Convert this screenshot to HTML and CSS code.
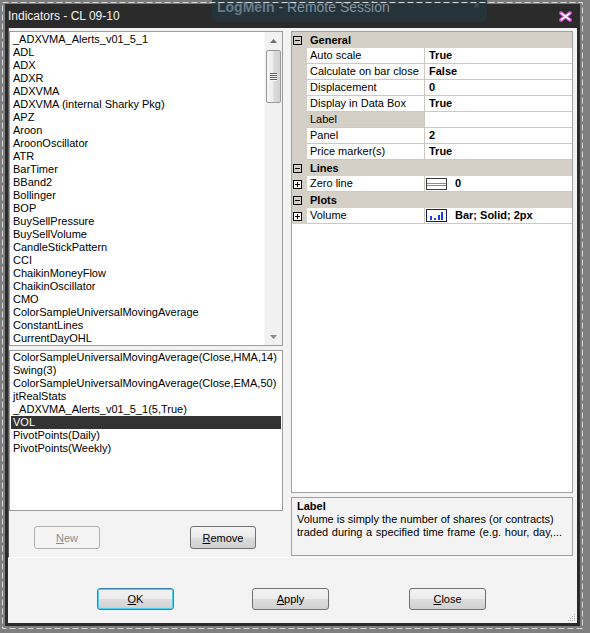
FILE: index.html
```html
<!DOCTYPE html>
<html>
<head>
<meta charset="utf-8">
<link rel="stylesheet" href="styles.css">
</head>
<body>
<div class="screen">
  <div class="window">
    <div class="titlebar">
      <span class="title">Indicators - CL 09-10</span>
      <svg class="close-x" width="13" height="11" viewBox="0 0 13 11">
        <path d="M2 2 L11 9 M11 2 L2 9" stroke="#c43fc4" stroke-width="4" stroke-linecap="square"/>
        <path d="M2.5 2.5 L10.5 8.5 M10.5 2.5 L2.5 8.5" stroke="#ffffff" stroke-width="1.8" stroke-linecap="square"/>
      </svg>
    </div>
    <div class="content">
      <div class="upper">
        <div class="leftcol">
          <div class="list list-all">
            <div class="items">
              <div class="item">_ADXVMA_Alerts_v01_5_1</div>
              <div class="item">ADL</div>
              <div class="item">ADX</div>
              <div class="item">ADXR</div>
              <div class="item">ADXVMA</div>
              <div class="item">ADXVMA (internal Sharky Pkg)</div>
              <div class="item">APZ</div>
              <div class="item">Aroon</div>
              <div class="item">AroonOscillator</div>
              <div class="item">ATR</div>
              <div class="item">BarTimer</div>
              <div class="item">BBand2</div>
              <div class="item">Bollinger</div>
              <div class="item">BOP</div>
              <div class="item">BuySellPressure</div>
              <div class="item">BuySellVolume</div>
              <div class="item">CandleStickPattern</div>
              <div class="item">CCI</div>
              <div class="item">ChaikinMoneyFlow</div>
              <div class="item">ChaikinOscillator</div>
              <div class="item">CMO</div>
              <div class="item">ColorSampleUniversalMovingAverage</div>
              <div class="item">ConstantLines</div>
              <div class="item">CurrentDayOHL</div>
            </div>
            <div class="vscroll">
              <div class="arrow up"><svg width="7" height="4" viewBox="0 0 7 4"><path d="M0 4 L3.5 0 L7 4 Z" fill="#6d6d6d"/></svg></div>
              <div class="thumb"><span></span><span></span><span></span><span></span></div>
              <div class="track"></div>
              <div class="arrow down"><svg width="7" height="4" viewBox="0 0 7 4"><path d="M0 0 L3.5 4 L7 0 Z" fill="#8a8a8a"/></svg></div>
            </div>
          </div>
          <div class="list list-applied">
            <div class="item">ColorSampleUniversalMovingAverage(Close,HMA,14)</div>
            <div class="item">Swing(3)</div>
            <div class="item">ColorSampleUniversalMovingAverage(Close,EMA,50)</div>
            <div class="item">jtRealStats</div>
            <div class="item">_ADXVMA_Alerts_v01_5_1(5,True)</div>
            <div class="item sel">VOL</div>
            <div class="item">PivotPoints(Daily)</div>
            <div class="item">PivotPoints(Weekly)</div>
          </div>
          <div class="btnrow">
            <div class="btn disabled btn-new"><u>N</u>ew</div>
            <div class="btn btn-remove"><u>R</u>emove</div>
          </div>
        </div>
        <div class="rightcol">
          <div class="grid">
            <div class="cat"><div class="margin"><span class="pm minus"></span></div><div class="catname">General</div></div>
            <div class="row"><div class="margin"></div><div class="name">Auto scale</div><div class="value">True</div></div>
            <div class="row"><div class="margin"></div><div class="name">Calculate on bar close</div><div class="value">False</div></div>
            <div class="row"><div class="margin"></div><div class="name">Displacement</div><div class="value">0</div></div>
            <div class="row"><div class="margin"></div><div class="name">Display in Data Box</div><div class="value">True</div></div>
            <div class="row"><div class="margin"></div><div class="name selected">Label</div><div class="value"></div></div>
            <div class="row"><div class="margin"></div><div class="name">Panel</div><div class="value">2</div></div>
            <div class="row"><div class="margin"></div><div class="name">Price marker(s)</div><div class="value">True</div></div>
            <div class="cat"><div class="margin"><span class="pm minus"></span></div><div class="catname">Lines</div></div>
            <div class="row"><div class="margin"><span class="pm plus"></span></div><div class="name">Zero line</div><div class="value withicon">
              <svg class="vicon" width="21" height="12" viewBox="0 0 21 12"><rect x="0.5" y="0.5" width="20" height="11" fill="#fff" stroke="#3c3c3c"/><path d="M1 5.5 H20 M1 7.5 H20" stroke="#8c8c8c"/></svg>0</div></div>
            <div class="cat"><div class="margin"><span class="pm minus"></span></div><div class="catname">Plots</div></div>
            <div class="row"><div class="margin"><span class="pm plus"></span></div><div class="name">Volume</div><div class="value withicon">
              <svg class="vicon" width="21" height="13" viewBox="0 0 21 13"><rect x="0.5" y="0.5" width="20" height="12" fill="#fff" stroke="#1c1c5c"/><rect x="4" y="7" width="2" height="4" fill="#1a3cf0"/><rect x="8" y="9" width="2" height="2" fill="#1a3cf0"/><rect x="12" y="6" width="2" height="5" fill="#1a3cf0"/><rect x="15" y="3" width="2" height="8" fill="#1a3cf0"/></svg>Bar; Solid; 2px</div></div>
          </div>
          <div class="desc">
            <div class="desc-title">Label</div>
            <div class="desc-line l1">Volume is simply the number of shares (or contracts)</div>
            <div class="desc-line l2">traded during a specified time frame (e.g. hour, day,...</div>
          </div>
        </div>
      </div>
      <div class="footer">
        <div class="btn btn-ok"><u>O</u>K</div>
        <div class="btn btn-apply"><u>A</u>pply</div>
        <div class="btn btn-close"><u>C</u>lose</div>
      </div>
      <svg class="grip" width="10" height="10" viewBox="0 0 10 10">
        <g fill="#b4b4b4">
          <rect x="8" y="2" width="1" height="1"/>
          <rect x="6" y="4" width="1" height="1"/><rect x="8" y="4" width="1" height="1"/>
          <rect x="4" y="6" width="1" height="1"/><rect x="6" y="6" width="1" height="1"/><rect x="8" y="6" width="1" height="1"/>
          <rect x="2" y="8" width="1" height="1"/><rect x="4" y="8" width="1" height="1"/><rect x="6" y="8" width="1" height="1"/><rect x="8" y="8" width="1" height="1"/>
        </g>
      </svg>
    </div>
  </div>
  <div class="logmein">
    <span class="lm-brand">LogMeIn</span><span class="lm-rest"> - Remote Session</span>
    <span class="lm-x">×</span>
  </div>
  <svg class="dashframe" width="590" height="633" viewBox="0 0 590 633">
    <rect x="2.5" y="2.5" width="580" height="626" fill="none" stroke="#d8d8d8" stroke-width="1" stroke-dasharray="6 3"/>
  </svg>
</div>
</body>
</html>
```

FILE: styles.css
```css
* { box-sizing: border-box; }
html, body { margin: 0; padding: 0; }
body {
  width: 590px;
  height: 633px;
  overflow: hidden;
  background: #7e7e7e;
  font-family: "Liberation Sans", Arial, sans-serif;
  font-size: 11px;
  color: #000;
}
.screen {
  position: relative;
  width: 590px;
  height: 633px;
  padding: 4px 10px 7px 5px;
}
.window {
  width: 575px;
  height: 622px;
  background: #2b2b2b;
  display: flex;
  flex-direction: column;
}
.titlebar {
  height: 24px;
  flex: none;
  display: flex;
  align-items: center;
  justify-content: space-between;
  padding: 0 8px 0 3px;
  color: #f4f4f4;
  font-size: 12px;
}
.title { line-height: 24px; }
.close-x { display: block; margin-top: 1px; }

.content {
  flex: 1;
  margin: 0 3px 3px 3px;
  background: #f3f3f3;
  position: relative;
  display: flex;
  flex-direction: column;
}
.upper {
  height: 530px;
  flex: none;
  display: flex;
  gap: 8px;
  padding: 3px 4px 0 0;
  border-left: 1px solid #5c5c5c;
  border-bottom: 1px solid #ffffff;
}
.leftcol {
  width: 274px;
  display: flex;
  flex-direction: column;
}
.list {
  background: #fff;
  border: 1px solid #9c9c9c;
}
.item {
  height: 13px;
  line-height: 13px;
  padding-left: 2px;
  white-space: nowrap;
}
.list-all {
  height: 315px;
  display: flex;
}
.list-all .items {
  flex: 1;
  padding: 1px 0 0 1px;
  overflow: hidden;
}
.vscroll {
  width: 18px;
  background: #f1f1f1;
  border-left: 1px solid #f8f8f8;
  display: flex;
  flex-direction: column;
  padding: 0 1px;
}
.arrow {
  height: 17px;
  display: flex;
  align-items: center;
  justify-content: center;
}
.arrow svg { display: block; }
.thumb {
  height: 53px;
  margin-top: 1px;
  border: 1px solid #989898;
  border-radius: 2px;
  background: linear-gradient(to right, #f6f6f6 0%, #ececec 45%, #dadada 55%, #d2d2d2 100%);
  display: flex;
  flex-direction: column;
  align-items: center;
  justify-content: center;
  gap: 1px;
}
.thumb span {
  display: block;
  width: 7px;
  height: 1px;
  background: #5a5a5a;
  box-shadow: 0 1px 0 #f8f8f8;
}
.track { flex: 1; }

.list-applied {
  margin-top: 4px;
  height: 161px;
  padding: 0 1px;
}
.item.sel {
  background: #333333;
  color: #ffffff;
}

.btnrow {
  display: flex;
  margin-top: 15px;
  padding-left: 25px;
  gap: 90px;
}
.btn {
  height: 23px;
  width: 66px;
  border: 1px solid #707070;
  border-radius: 3px;
  background: linear-gradient(to bottom, #f3f3f3 0%, #ebebeb 48%, #dddddd 52%, #d0d0d0 100%);
  display: flex;
  align-items: center;
  justify-content: center;
  color: #000;
  font-size: 11px;
}
.btn.disabled {
  border-color: #adb2b5;
  background: #f4f4f4;
  color: #8d8d8d;
}

.rightcol {
  width: 282px;
  display: flex;
  flex-direction: column;
}
.grid {
  height: 462px;
  background: #fff;
  border: 1px solid #a0a0a0;
}
.cat, .row {
  height: 16px;
  display: flex;
}
.margin {
  width: 15px;
  flex: none;
  background: #d4d0c8;
  display: flex;
  align-items: center;
  padding-left: 1px;
}
.cat { background: #d4d0c8; }
.catname {
  font-weight: bold;
  padding-left: 3px;
  line-height: 16px;
}
.name {
  width: 118px;
  flex: none;
  padding-left: 3px;
  line-height: 15px;
  border-right: 1px solid #cdc9c1;
  border-bottom: 1px solid #cdc9c1;
  white-space: nowrap;
  overflow: hidden;
}
.name.selected { background: #d4d0c8; }
.value {
  flex: 1;
  padding-left: 4px;
  line-height: 15px;
  font-weight: bold;
  border-bottom: 1px solid #cdc9c1;
  white-space: nowrap;
}
.value.withicon {
  display: flex;
  align-items: center;
  padding-left: 1px;
}
.vicon { display: block; margin-right: 8px; }
.pm {
  display: block;
  width: 9px;
  height: 9px;
  border: 1px solid #000;
  background: #fff;
  position: relative;
}
.pm::before {
  content: "";
  position: absolute;
  left: 1px;
  top: 3px;
  width: 5px;
  height: 1px;
  background: #000;
}
.pm.plus::after {
  content: "";
  position: absolute;
  left: 3px;
  top: 1px;
  width: 1px;
  height: 5px;
  background: #000;
}
.cat .pm { background: transparent; }

.desc {
  margin-top: 4px;
  height: 59px;
  border: 1px solid #a0a0a0;
  background: #f3f3f3;
  padding: 2px 5px;
  line-height: 13px;
}
.desc-title { font-weight: bold; }
.desc-line { white-space: nowrap; }
.desc-line.l1 { word-spacing: 0; }
.desc-line.l2 { word-spacing: 0.6px; }

.footer {
  flex: 1;
  display: flex;
  padding-top: 30px;
}
.footer .btn {
  width: 77px;
  height: 22px;
}
.btn-ok {
  margin-left: 89px;
  border-color: #3c7fb1;
  box-shadow: inset 0 0 0 1px #48d3f5;
}
.btn-apply { margin-left: 78px; }
.btn-close { margin-left: 80px; }

.grip {
  position: absolute;
  right: 1px;
  bottom: 1px;
}

.logmein {
  position: absolute;
  left: 212px;
  top: 0;
  width: 275px;
  height: 22px;
  background: rgba(36, 52, 62, 0.88);
  border-radius: 0 0 5px 5px;
  font-family: "Liberation Sans", sans-serif;
  font-size: 14px;
  line-height: 14px;
  padding-left: 5px;
  color: #8193a0;
}
.lm-brand { font-weight: bold; color: #677b89; }
.lm-x {
  position: absolute;
  right: 7px;
  top: 0;
  font-size: 11px;
  line-height: 11px;
  color: #4d5f6b;
}
.dashframe {
  position: absolute;
  left: 0;
  top: 0;
  pointer-events: none;
}
```
